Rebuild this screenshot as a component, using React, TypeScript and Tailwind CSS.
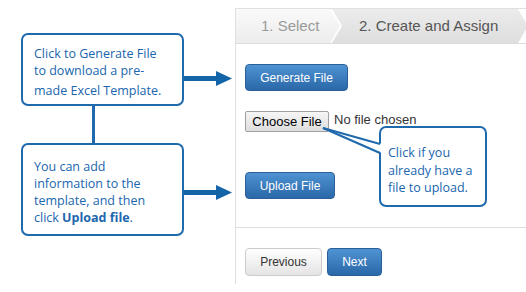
import React from 'react';

const blue = '#1f69ad';

function Arrow() {
  return (
    <svg width="48" height="15" viewBox="0 0 48 15" className="shrink-0">
      <rect x="0" y="5" width="34" height="5" fill="#1464a8" />
      <polygon points="32,0 48,7.5 32,15" fill="#1464a8" />
    </svg>
  );
}

function BlueButton({ children, className }: { children: React.ReactNode; className: string }) {
  return (
    <button
      className={`flex items-center justify-center rounded-[4px] border border-[#2a5f99] bg-gradient-to-b from-[#4f93d3] to-[#2a68a8] text-white text-[12px] ${className}`}
    >
      {children}
    </button>
  );
}

export default function App() {
  return (
    <div className="relative w-[526px] h-[292px] bg-white flex overflow-hidden font-['Liberation_Sans',Arial,sans-serif]">
      {/* Left callouts */}
      <div className="w-[235px] shrink-0 pt-[33px] pl-[21px] flex flex-col font-['Open_Sans','Noto_Sans',sans-serif] text-[12.5px] leading-[17px] text-[#2066ae]">
        <div className="flex items-start">
          <div className="w-[163px] h-[73px] shrink-0 border-2 border-[#1f69ad] rounded-[7px] pl-[11px] pt-[10px]">
            <div>Click to Generate File</div>
            <div>to download a pre-</div>
            <div className="mt-[3px]">made Excel Template.</div>
          </div>
          <div className="mt-[38px]">
            <Arrow />
          </div>
        </div>
        <div className="ml-[71px] w-[3px] h-[37px] bg-[#1f69ad]" />
        <div className="flex items-start">
          <div className="w-[163px] h-[93px] shrink-0 border-2 border-[#1f69ad] rounded-[7px] pl-[11px] pt-[13px]">
            <div>You can add</div>
            <div>information to the</div>
            <div>template, and then</div>
            <div>
              click <b>Upload file</b>.
            </div>
          </div>
          <div className="mt-[42px]">
            <Arrow />
          </div>
        </div>
      </div>

      {/* Wizard panel */}
      <div className="flex-1 mt-[8px] h-[276px] border-l border-t border-[#e0e0e0] flex flex-col">
        <div className="h-[35px] flex bg-white border-b border-[#dcdcdc] text-[15px]">
          <div className="w-[104px] shrink-0 flex items-center pl-[25px] bg-gradient-to-b from-[#fafafa] to-[#ececec] text-[#9a9a9a] [clip-path:polygon(0_0,calc(100%-10px)_0,100%_50%,calc(100%-10px)_100%,0_100%)]">
            1. Select
          </div>
          <div className="w-[196px] shrink-0 -ml-[8px] flex items-center pl-[27px] bg-gradient-to-b from-[#ececec] to-[#dedede] text-[#555] [clip-path:polygon(0_0,calc(100%-10px)_0,100%_50%,calc(100%-10px)_100%,0_100%,10px_50%)]">
            2. Create and Assign
          </div>
        </div>

        <div className="pl-[9px] flex flex-col items-start">
          <BlueButton className="mt-[20px] w-[103px] h-[27px]">Generate File</BlueButton>
          <div className="mt-[20px] flex items-center">
            <button className="w-[84px] h-[21px] rounded-[2px] border border-[#a0a0a0] bg-gradient-to-b from-[#f6f6f6] to-[#dedede] text-[13px] text-black">
              Choose File
            </button>
            <span className="ml-[5px] text-[13px] text-[#333] -mt-[3px]">No file chosen</span>
          </div>
          <BlueButton className="mt-[40px] w-[90px] h-[27px]">Upload File</BlueButton>
        </div>

        <div className="mt-[28px] border-t border-[#dddddd]" />

        <div className="pl-[9px] mt-[20px] flex gap-[5px]">
          <button className="w-[77px] h-[28px] rounded-[4px] border border-[#cccccc] bg-gradient-to-b from-white to-[#e4e4e4] text-[12px] text-[#333]">
            Previous
          </button>
          <BlueButton className="w-[55px] h-[28px]">Next</BlueButton>
        </div>
      </div>

      {/* Choose-file callout */}
      <div className="absolute left-[379px] top-[126px] w-[108px] h-[81px] border-2 border-[#1f69ad] rounded-[7px] bg-white pl-[7px] pt-[16px] font-['Open_Sans','Noto_Sans',sans-serif] text-[12.5px] leading-[17.5px] text-[#2066ae]">
        <div>Click if you</div>
        <div>already have a</div>
        <div>file to upload.</div>
      </div>
      <svg className="absolute left-0 top-0 pointer-events-none" width="526" height="292">
        <polygon points="323,128 382,144 382,153" fill="white" />
        <line x1="323" y1="128" x2="380" y2="144" stroke={blue} strokeWidth="2" />
        <line x1="323" y1="128" x2="380" y2="153" stroke={blue} strokeWidth="2" />
      </svg>
    </div>
  );
}
